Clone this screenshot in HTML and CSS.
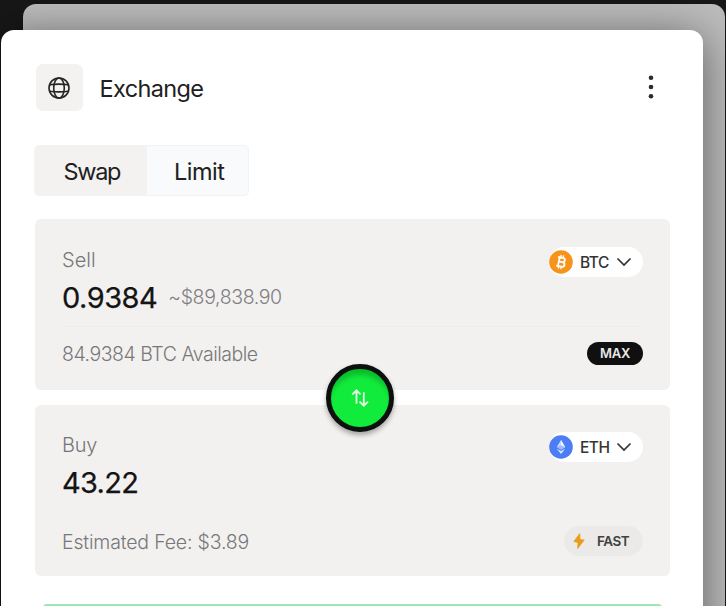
FILE: index.html
```html
<!DOCTYPE html>
<html lang="en">
<head>
<meta charset="utf-8">
<title>Exchange</title>
<link rel="stylesheet" href="styles.css">
</head>
<body>
<div class="stack">
  <div class="sheet-back"></div>
  <main class="sheet">
    <header class="header">
      <div class="globe">
        <svg width="24" height="24" viewBox="0 0 24 24" fill="none" stroke="#262626" stroke-width="1.6"><circle cx="12" cy="12" r="10"/><ellipse cx="12" cy="12" rx="5.3" ry="10"/><path d="M2.4 8.7Q12 7.6 21.6 8.7M2.4 15.3Q12 16.4 21.6 15.3"/></svg>
      </div>
      <h1 class="title">Exchange</h1>
      <svg class="more" width="8" height="26" viewBox="0 0 8 26" fill="#2b2b2e"><circle cx="4" cy="3.7" r="2.3"/><circle cx="4" cy="13" r="2.3"/><circle cx="4" cy="22.3" r="2.3"/></svg>
    </header>
    <nav class="tabs">
      <span class="tab tab-active">Swap</span>
      <span class="tab tab-limit">Limit</span>
    </nav>
    <div class="cards">
      <section class="card">
        <div class="row">
          <span class="label sell">Sell</span>
          <div class="coin">
            <svg width="24" height="24" viewBox="0 0 24 24"><circle cx="12" cy="12" r="11.8" fill="#f7931a"/><g transform="rotate(12 12 12)" fill="none" stroke="#fff" stroke-width="1.8"><path d="M8 7.5H13.2A2.1 2.1 0 0 1 13.2 11.9H9.8M9.8 11.9H13.7A2.3 2.3 0 0 1 13.7 16.5H8M9.8 7.5V16.5"/><path d="M10.7 5V7.5M13.2 5V7.5M10.7 16.5V19M13.2 16.5V19" stroke-width="1.3"/></g></svg>
            <span class="code">BTC</span>
            <svg width="16" height="10" viewBox="0 0 16 10" fill="none" stroke="#333" stroke-width="1.7"><path d="M1.5 1.5L8 8L14.5 1.5"/></svg>
          </div>
        </div>
        <div class="amount-line"><span class="amount sell-amount">0.9384</span><span class="usd">~$89,838.90</span></div>
        <div class="row available-row">
          <span class="note available">84.9384 BTC Available</span>
          <span class="max">MAX</span>
        </div>
      </section>
      <section class="card">
        <div class="row">
          <span class="label buy">Buy</span>
          <div class="coin coin-eth">
            <svg width="24" height="24" viewBox="0 0 24 24"><circle cx="12" cy="12" r="11.8" fill="#4c7df5"/><path d="M12 5L7.8 12L12 14.4L16.2 12Z" fill="#c5d8ff"/><path d="M12 5V14.4L16.2 12Z" fill="#edf3ff"/><path d="M7.8 13.7L12 19L16.2 13.7L12 16Z" fill="#d9e6ff"/><path d="M7.8 12L12 10.3L16.2 12L12 14.4Z" fill="#9bbbff"/></svg>
            <span class="code">ETH</span>
            <svg width="16" height="10" viewBox="0 0 16 10" fill="none" stroke="#333" stroke-width="1.7"><path d="M1.5 1.5L8 8L14.5 1.5"/></svg>
          </div>
        </div>
        <div class="amount-line"><span class="amount buy-amount">43.22</span></div>
        <div class="row fee-row">
          <span class="note fee">Estimated Fee: $3.89</span>
          <span class="fast"><svg width="12" height="16" viewBox="0 0 12 16"><path d="M6.8 0.5L0.8 8.6L5 9.4L4.7 15.5L11.2 7.1L7 6.4Z" fill="#e99c16" stroke="#e99c16" stroke-width=".7"/></svg><span class="fast-text">FAST</span></span>
        </div>
      </section>
      <div class="switch">
        <svg width="18" height="18" viewBox="0 0 18 18" fill="none" stroke="#e2ffe5" stroke-width="1.8"><path d="M5.5 14.8V1.5M1.3 5.5L5.5 1.3L9.5 5.3M12.8 3.2V16.5M8.6 12.7L12.8 16.7L17 12.7"/></svg>
      </div>
    </div>
    <div class="action"></div>
  </main>
</div>
</body>
</html>
```
FILE: styles.css
```css
* { box-sizing: border-box; }
body { margin: 0; height: 606px; overflow: hidden; background: #171717; font-family: Inter, "Liberation Sans", sans-serif; color: #202020; }
.stack { display: grid; height: 606px; overflow: hidden; grid-template-columns: 726px; grid-template-rows: 700px; }
.sheet-back, .sheet { grid-area: 1 / 1; }
.sheet-back { margin: 4px 1px 0 23px; border-radius: 13px; background: #bcbcbc; }
.sheet { position: relative; margin: 30px 23px 0 1px; padding: 34px 33px 0 34px; border-radius: 13px; background: #fff; box-shadow: 0 6px 44px rgba(0, 0, 0, .5); }
.header { display: flex; align-items: center; height: 47px; margin-left: 1px; }
.globe { display: grid; place-items: center; width: 47px; height: 47px; padding: 0 1px 0 0; border-radius: 7px; background: #f3f2f1; }
.title { margin: 2px 0 0 16.5px; font-size: 23.5px; line-height: 30px; font-weight: 400; letter-spacing: -.65px; }
.more { margin: -1px 15px 0 auto; }
.tabs { display: flex; width: 215px; height: 51px; margin: 34px 0 0 -1px; border-radius: 5px; overflow: hidden; background: #f8fafc; border: 1px solid #f2f3f4; }
.tab { display: flex; align-items: center; padding-top: 1px; font-size: 23.5px; letter-spacing: -.5px; }
.tab-active { width: 112px; padding-left: 28.5px; background: #f3f2f0; letter-spacing: -1.3px; }
.tab-limit { padding-left: 27px; }
.cards { position: relative; display: grid; gap: 15px; margin: 23px 0 0; }
.card { height: 171px; padding: 27px 27px 0; border-radius: 6px; background: #f2f1f0; }
.row { display: flex; align-items: center; justify-content: space-between; height: 32px; }
.label { font-size: 20px; color: #767678; font-weight: 300; }
.sell { margin-top: -5px; }
.buy { margin-top: -6px; letter-spacing: -.3px; }
.coin { display: flex; align-items: center; width: 94px; height: 30px; margin-top: -1px; border-radius: 15px; background: #fff; }
.coin-eth { margin-top: -2px; }
.code { width: 36px; margin: 1px 0 0 7px; font-size: 15.5px; font-weight: 500; letter-spacing: -.5px; color: #343434; }
.amount-line { display: flex; align-items: center; height: 40px; margin-top: -1px; }
.amount { font-size: 29px; font-weight: 400; color: #141414; letter-spacing: -.5px; -webkit-text-stroke: .25px #141414; }
.buy-amount { margin-top: -2px; letter-spacing: -.7px; }
.usd { margin: -1px 0 0 11px; font-size: 19.5px; font-weight: 300; color: #808082; letter-spacing: -.38px; }
.available-row { margin-top: 9px; height: 54px; border-top: 1px solid #eeeded; }
.note { font-size: 19.5px; font-weight: 300; color: #78787a; }
.available { letter-spacing: -.48px; margin-top: 1px; }
.fee { letter-spacing: -.18px; margin-top: 2px; }
.max { display: grid; place-items: center; width: 56px; height: 23px; margin-top: -1px; border-radius: 12px; background: #101010; color: #e8e8e8; font-size: 13px; font-weight: 600; letter-spacing: -.3px; }
.fee-row { margin-top: 22px; }
.fast { display: flex; align-items: center; width: 79px; height: 30px; padding-left: 9px; border-radius: 15px; background: #ebeae9; }
.fast-text { margin-left: 12px; font-size: 13.5px; font-weight: 600; color: #414141; letter-spacing: -.5px; }
.switch { position: absolute; left: 291px; top: 145px; width: 68px; height: 68px; border: 5px solid #0c110d; border-radius: 50%; display: grid; place-items: center; background: #11ec3c; box-shadow: 0 3px 5px rgba(0, 0, 0, .32), inset 0 9px 5px -3px #0dbc2c; }
.action { height: 60px; margin: 28px 7px 0; border-radius: 5px; background: #9ce7b3; }
```
